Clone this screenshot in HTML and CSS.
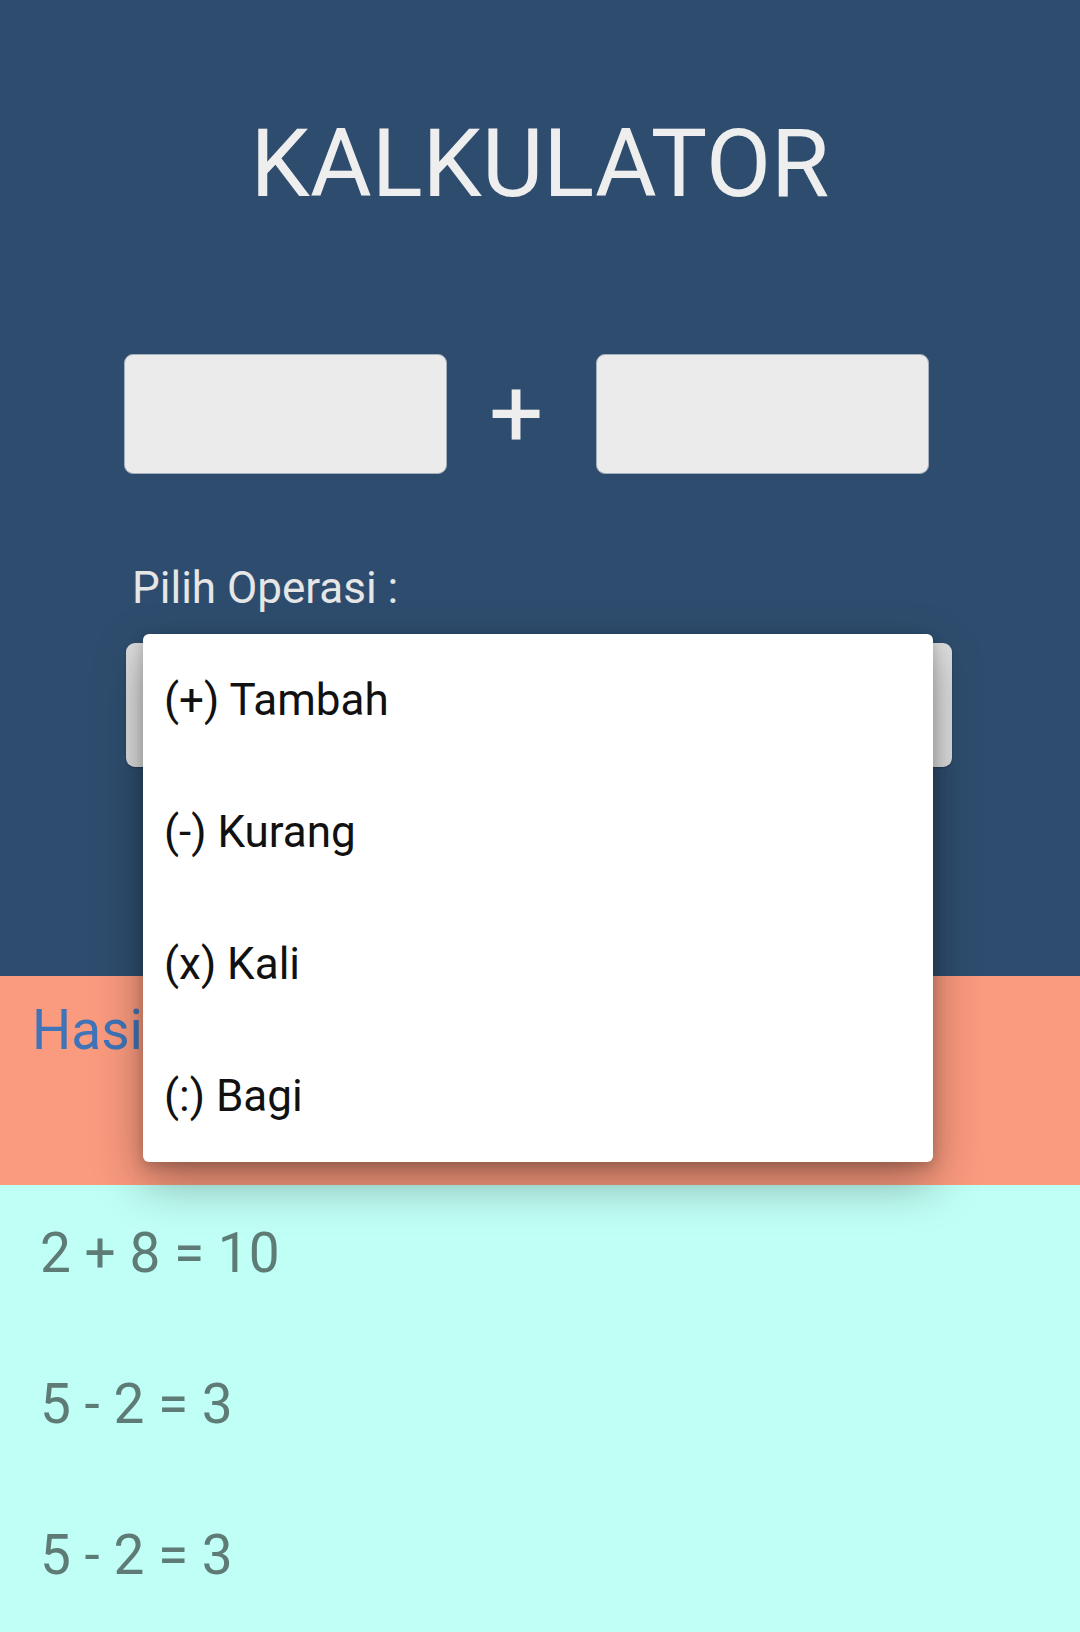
FILE: index.html
```html
<!DOCTYPE html>
<html lang="id">
<head>
<meta charset="UTF-8">
<meta name="viewport" content="width=device-width, initial-scale=1.0">
<title>Kalkulator</title>
<link rel="stylesheet" href="styles.css">
</head>
<body>

<div class="header">
    <h1 class="title">KALKULATOR</h1>

    <div class="operands">
        <div class="num-box first"></div>
        <div class="op-sign">+</div>
        <div class="num-box second"></div>
    </div>

    <div class="label">Pilih Operasi :</div>

    <div class="select-wrap">
        <div class="select-box"></div>
        <!-- opened spinner list -->
        <div class="dropdown">
            <div class="dropdown-item">(+) Tambah</div>
            <div class="dropdown-item">(-) Kurang</div>
            <div class="dropdown-item">(x) Kali</div>
            <div class="dropdown-item">(:) Bagi</div>
        </div>
    </div>
</div>

<div class="result-head">Hasil :</div>

<div class="history">
    <div class="history-item">2 + 8 = 10</div>
    <div class="history-item">5 - 2 = 3</div>
    <div class="history-item">5 - 2 = 3</div>
</div>

</body>
</html>
```

FILE: styles.css
```css
body {
    margin: 0;
    padding: 0;
    font-family: Roboto, "Noto Sans", sans-serif;
    height: 1632px;
    overflow: hidden;
    background-color: #bfFFF5;
}
.header {
    background-color: #2e4d6e;
    height: 976px;
    padding-top: 116px;
    box-sizing: border-box;
}
.title {
    margin: 0;
    font-size: 94.6px;
    font-weight: 400;
    line-height: 95px;
    color: #eeeeee;
    text-align: center;
}
.operands {
    display: flex;
    align-items: center;
    margin-top: 143px;
    padding-left: 124px;
}
.num-box {
    height: 120px;
    background-color: #ebebeb;
    border: 1px solid #a4afbd;
    border-radius: 9px;
    box-sizing: border-box;
}
.num-box.first {
    width: 323px;
}
.num-box.second {
    width: 333px;
}
.op-sign {
    width: 50px;
    margin: 0 57px 0 42px;
    font-size: 96px;
    line-height: 96px;
    color: #eeeeee;
    text-align: center;
}
.label {
    margin-top: 89px;
    padding-left: 132px;
    font-size: 44px;
    line-height: 50px;
    color: #e6e6e6;
}
.select-wrap {
    position: relative;
    margin: 30px 0 0 126px;
    width: 826px;
    height: 124px;
}
.select-box {
    height: 100%;
    background: linear-gradient(to right, #dcdcdc, #e8e8e8 8%, #e6e6e6 90%, #dedede);
    border-radius: 9px;
    box-shadow: 0 1px 2px rgba(0, 0, 0, 0.25);
}
.dropdown {
    position: absolute;
    z-index: 10;
    left: 17px;
    top: -9px;
    width: 790px;
    background-color: #ffffff;
    border-radius: 6px;
    box-shadow: 0 20px 48px rgba(0, 0, 0, 0.34), 0 4px 14px rgba(0, 0, 0, 0.2);
}
.dropdown-item {
    height: 132px;
    padding-left: 21px;
    font-size: 44px;
    line-height: 132px;
    color: #111111;
}
.result-head {
    height: 209px;
    box-sizing: border-box;
    padding: 22px 0 0 32px;
    background-color: #fa9a7e;
    font-size: 55px;
    line-height: 64px;
    color: #3f74b8;
}
.history {
    background-color: #bfFFF5;
}
.history-item {
    height: 151px;
    box-sizing: border-box;
    padding: 36px 0 0 40px;
    font-size: 55px;
    line-height: 64px;
    color: #5e7b76;
}
```
